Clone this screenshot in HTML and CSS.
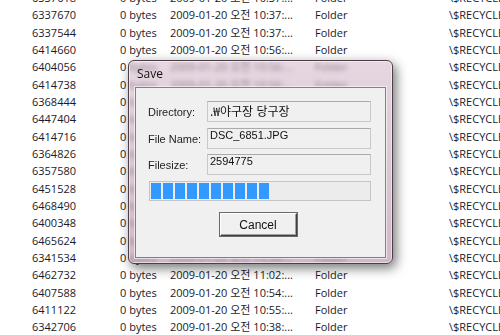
FILE: index.html
```html
<!DOCTYPE html>
<html lang="ko">

<head>
    <meta charset="UTF-8">
    <title>Save</title>
    <link rel="stylesheet" href="styles.css">
</head>

<body>

    <div class="list" id="list"></div>

    <div class="dialog">
        <div class="title">Save</div>
        <div class="client">
            <div class="field-row">
                <span class="label">Directory:</span>
                <div class="field field-ko">.₩야구장 당구장</div>
            </div>
            <div class="field-row">
                <span class="label">File Name:</span>
                <div class="field">DSC_6851.JPG</div>
            </div>
            <div class="field-row">
                <span class="label">Filesize:</span>
                <div class="field">2594775</div>
            </div>
            <div class="progress" id="progress"></div>
            <div class="actions">
                <button class="btn">Cancel</button>
            </div>
        </div>
    </div>

    <script>
        // rows behind the dialog
        var rows = [
            ['6337618', '10:37'], ['6337670', '10:37'], ['6337544', '10:37'], ['6414660', '10:56'],
            ['6404056', '10:56'], ['6414738', '10:56'], ['6368444', '10:45'], ['6447404', '11:00'],
            ['6414716', '10:56'], ['6364826', '10:45'], ['6357580', '10:41'], ['6451528', '11:00'],
            ['6468490', '11:03'], ['6400348', '10:53'], ['6465624', '11:02'], ['6341534', '10:38'],
            ['6462732', '11:02'], ['6407588', '10:54'], ['6411122', '10:55'], ['6342706', '10:38']
        ];
        var list = document.getElementById('list');
        rows.forEach(function (r) {
            var row = document.createElement('div');
            row.className = 'row';
            row.innerHTML = '<span>' + r[0] + '</span><span>0 bytes</span>' +
                '<span>2009-01-20 오전 ' + r[1] + ':...</span><span>Folder</span>' +
                '<span>\\$RECYCLE.BIN\\S-1-5-21</span>';
            list.appendChild(row);
        });

        // progress blocks
        var progress = document.getElementById('progress');
        for (var i = 0; i < 10; i++) {
            var b = document.createElement('span');
            b.className = 'block';
            progress.appendChild(b);
        }
    </script>

</body>

</html>
```

FILE: styles.css
```css
body {
    margin: 0;
    width: 500px;
    height: 335px;
    overflow: hidden;
    background: #fff;
    font-family: 'Open Sans', 'Noto Sans CJK KR', sans-serif;
    font-size: 11px;
    color: #1a1a2a;
}

.list {
    margin-top: -11px;
}

.row {
    display: grid;
    grid-template-columns: 88px 50px 145px 134px 1fr;
    padding-left: 32px;
    height: 17.33px;
    line-height: 17.33px;
    white-space: nowrap;
    overflow: hidden;
}

.row span {
    overflow: hidden;
}

/* dialog window */
.dialog {
    position: absolute;
    left: 128px;
    top: 60px;
    width: 265px;
    height: 204px;
    box-sizing: border-box;
    padding: 0 6px 5px 6px;
    display: flex;
    flex-direction: column;
    border: 1px solid #4c3f48;
    border-radius: 6px;
    background: linear-gradient(to bottom, rgba(214, 190, 206, 0.62), rgba(190, 158, 180, 0.72));
    backdrop-filter: blur(2px);
    box-shadow: inset 0 0 0 1px rgba(255, 255, 255, 0.5), 3px 4px 12px rgba(0, 0, 0, 0.55);
}

.title {
    height: 26px;
    line-height: 25px;
    padding-left: 2px;
    font-family: 'Open Sans', sans-serif;
    font-size: 12px;
    color: #111;
}

.client {
    flex: 1;
    background: #f0f0f0;
    border: 1px solid #8a7c86;
    box-shadow: 0 0 0 1px rgba(255, 255, 255, 0.6);
    padding: 13px 14px 0 12px;
    font-family: 'Liberation Sans', Arial, sans-serif;
}

.field-row {
    display: flex;
    align-items: flex-start;
    height: 21px;
    margin-bottom: 5.5px;
}

.label {
    width: 59px;
    padding-top: 5px;
    font-size: 11px;
    color: #222;
}

.field {
    flex: 1;
    height: 21px;
    box-sizing: border-box;
    padding: 0 2px;
    border: 1px solid #c8c8c8;
    border-top-color: #aaaaaa;
    background: #f0f0f0;
    font-size: 11px;
    color: #111;
}

.field-ko {
    font-family: 'Noto Sans CJK KR', sans-serif;
    font-size: 12px;
    line-height: 18px;
}

.progress {
    display: flex;
    gap: 2px;
    height: 20px;
    box-sizing: border-box;
    margin: 6px 0 0 1px;
    padding: 1px;
    border: 1px solid #c4c4c4;
    background: #ececec;
}

.block {
    width: 10px;
    background: #3399ff;
}

.actions {
    display: flex;
    justify-content: center;
    margin-top: 12px;
}

.btn {
    width: 77px;
    height: 23px;
    margin-left: -3px;
    padding: 0;
    font-family: 'Liberation Sans', Arial, sans-serif;
    font-size: 12px;
    color: #111;
    background: #f0f0f0;
    border: 1px solid #404040;
    border-top-color: #fff;
    border-left-color: #fff;
    box-shadow: inset -1px -1px 0 #a0a0a0, 0 0 0 1px #6a6a6a;
}
```
